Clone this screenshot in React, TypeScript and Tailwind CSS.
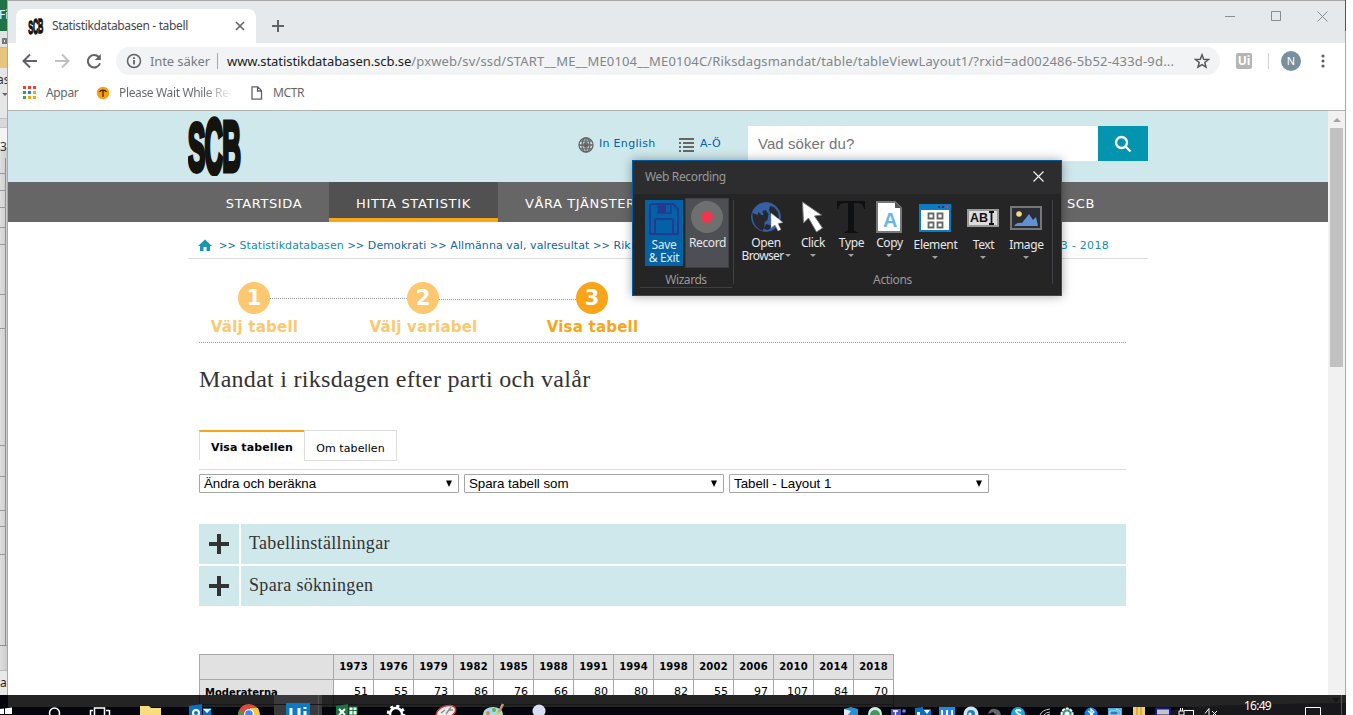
import type { ReactNode } from "react";

function ScbLogo({ className }: { className?: string }) {
  return (
    <svg viewBox="0 0 54 60" className={className} fontFamily="Liberation Sans" fontWeight="700" fontSize="20" fill="#14130e" stroke="#14130e">
      <text transform="translate(-0.3 55.2) scale(1.33 3.4)" strokeWidth="1.4">S</text>
      <text transform="translate(16.4 57) scale(1.28 3.9)" strokeWidth="1.4">C</text>
      <text transform="translate(34.2 54.7) scale(1.3 3.5)" strokeWidth="1.4">B</text>
    </svg>
  );
}

function ExcelEdge() {
  const lines = [173, 190, 207, 227, 244, 294, 328, 445, 476, 510, 526, 554];
  return (
    <div className="absolute top-0 left-0 h-[695px] w-[7px] overflow-hidden bg-[#dcdcdc] font-['Noto_Sans',sans-serif] text-[12px]">
      <div className="h-[31px] bg-[#217346] pt-[7px] leading-4 text-white"><span className="-ml-px">Fi</span></div>
      <div className="flex h-4 items-center bg-[#e3e3e3]"><span className="mt-1 ml-0.5 h-1.5 w-1.5 border-2 border-[#777]" /></div>
      <div className="h-[21px] border-t border-[#b9b9b9] bg-[#e8c47c]" />
      <div className="h-[50px] bg-[#e6e6e6] pt-1 leading-4 text-[#333]">
        <div className="-ml-[3px]">as</div>
        <div className="mt-[5px] ml-0.5 h-0 w-0 border-x-3 border-t-3 border-x-transparent border-t-[#666]" />
      </div>
      <div className="h-[10px] border-y border-[#c4c4c4] bg-[#d8d8d8]" />
      <div className="h-[20px] bg-[#f4f4f4] leading-[38px] text-[#333]">3</div>
      <div className="h-[522px] bg-gradient-to-r from-[#dedede] to-[#cccccc]" />
      <div className="border-t border-[#bbb] bg-[#e8e8e8] leading-6 text-[#222]">ac</div>
      <svg className="absolute top-0 left-0" width="8" height="695">
        <path d="M5.500 158V645M0 645.500H8" stroke="#8f8f8f" fill="none" />
        {lines.map((y) => <path key={y} d={`M0 ${y + 0.5}H6`} stroke="#999" />)}
      </svg>
    </div>
  );
}

function AppsIcon() {
  const colors = ["#ea4335", "#ea4335", "#ea4335", "#34a853", "#1a82f0", "#f6a609", "#34a853", "#f6a609", "#f6a609"];
  return (
    <div className="grid w-[13px] grid-cols-3 gap-[2px]">
      {colors.map((c, i) => <span key={i} className="h-[3px] w-[3px]" style={{ backgroundColor: c }} />)}
    </div>
  );
}

function ChromeTop() {
  return (
    <div className="h-[110px] border-b border-[#b3b3b3] bg-white font-['Noto_Sans',sans-serif]">
      <div className="flex h-[42px] items-end bg-[#e6e9ec] pl-2">
        <div className="flex h-[34px] w-60 items-center rounded-t-lg bg-white pl-3">
          <ScbLogo className="h-[17px] w-4" />
          <span className="ml-2 w-[183px] text-[12px] tracking-[-0.35px] whitespace-nowrap text-[#45494d]">Statistikdatabasen - tabell</span>
          <svg width="10" height="10" viewBox="0 0 10 10" stroke="#5f6368" strokeWidth="1.6"><path d="M1 1l8 8M9 1l-8 8" /></svg>
        </div>
        <svg className="mb-[11px] ml-4" width="12" height="12" stroke="#5f6368" strokeWidth="2"><path d="M6 0v12M0 6h12" /></svg>
        <svg className="mr-[17px] mb-[21px] ml-auto" width="103" height="12" fill="none" stroke="#8a8d90"><path d="M0 6.500h10M46.500 1.500h9v9h-9zM92.500 1.500l10 10M102.500 1.500l-10 10" /></svg>
      </div>
      <div className="flex h-[36px] items-center pl-[14px]">
        <svg width="16" height="16" viewBox="0 0 16 16" fill="none" stroke="#5f6368" strokeWidth="2"><path d="M15 8H2M8 1.500L1.500 8 8 14.500" /></svg>
        <svg className="ml-4" width="16" height="16" viewBox="0 0 16 16" fill="none" stroke="#bdc1c6" strokeWidth="2"><path d="M1 8h13M8 1.500L14.500 8 8 14.500" /></svg>
        <svg className="ml-4" width="16" height="16" viewBox="0 0 16 16" fill="none" stroke="#5f6368" strokeWidth="2"><path d="M14 10.200A6.200 6.200 0 1 1 12.700 4" /><path d="M14.800 1v6h-6z" fill="#5f6368" stroke="none" /></svg>
        <div className="ml-[14px] flex h-7 w-[1104px] items-center rounded-full bg-[#f1f3f4] pl-[10px] text-[13px] whitespace-nowrap">
          <svg width="16" height="16" viewBox="0 0 16 16" fill="none" stroke="#5f6368" strokeWidth="1.5"><circle cx="8" cy="8" r="6.500" /><path d="M8 7v4.500M8 4.300v1.600" strokeWidth="1.800" /></svg>
          <span className="ml-2 w-[67px] pt-px tracking-[-0.1px] text-[#777b80]">Inte säker</span>
          <span className="mr-[9px] h-4 w-px bg-[#a5a8ab]" />
          <span className="w-[967px] pt-px"><span className="tracking-[-0.07px] text-[#202124]">www.statistikdatabasen.scb.se</span><span className="tracking-[0.17px] text-[#80868b]">/pxweb/sv/ssd/START__ME__ME0104__ME0104C/Riksdagsmandat/table/tableViewLayout1/?rxid=ad002486-5b52-433d-9d...</span></span>
          <svg width="16" height="16" viewBox="0 0 16 16" fill="none" stroke="#55595e" strokeWidth="1.500"><path d="M8 1.800l1.700 4.400 4.700.3-3.600 3 1.200 4.600L8 11.600l-4 2.500 1.200-4.600-3.600-3 4.700-.3z" /></svg>
        </div>
        <span className="ml-4 h-4 w-4 rounded-[2px] bg-[#b5b5b5] text-center text-[12px] leading-[15px] font-bold text-white">Ui</span>
        <span className="ml-4 h-4 w-px bg-[#d0d2d5]" />
        <span className="ml-3 h-5 w-5 rounded-full bg-[#78909c] text-center text-[11px] leading-5 text-white">N</span>
        <svg className="ml-5" width="4" height="14" fill="#5f6368"><circle cx="2" cy="2" r="1.600" /><circle cx="2" cy="7" r="1.600" /><circle cx="2" cy="12" r="1.600" /></svg>
      </div>
      <div className="flex h-[27px] items-center pl-[15px] text-[12px] tracking-[-0.35px] whitespace-nowrap text-[#63676c]">
        <AppsIcon />
        <span className="ml-[10px] w-[50px]">Appar</span>
        <svg width="14" height="14" viewBox="0 0 14 14"><circle cx="7" cy="7" r="6.200" fill="#ff9d0a" /><path d="M3.500 6c1.200-2.600 5.800-2.600 7 0M7 4.500V11" stroke="#3c2a08" fill="none" strokeWidth="1.300" /></svg>
        <span className="ml-[9px] w-[112px] overflow-hidden bg-gradient-to-r from-[#63676c] from-75% to-[#63676c]/5 bg-clip-text text-transparent">Please Wait While Rec</span>
        <svg className="ml-[20px]" width="12" height="14" viewBox="0 0 12 14" fill="none" stroke="#5f6368" strokeWidth="1.300"><path d="M1 .8h5.800L10.500 4.500v8.700H1zM6.500 1v4h4" /></svg>
        <span className="ml-[10px]">MCTR</span>
      </div>
    </div>
  );
}

function SiteHeader() {
  return (
    <>
      <header className="flex h-[71px] bg-[#cfe8ec] pl-[180px] font-['DejaVu_Sans',sans-serif] text-[11px] text-[#0063a8]">
        <ScbLogo className="mt-[5px] h-[60px] w-[54px]" />
        <div className="mt-[25px] ml-[336px] flex h-[17px] w-[101px] items-center">
          <svg width="16" height="16" viewBox="0 0 16 16" fill="none" stroke="#666" strokeWidth="1.300"><circle cx="8" cy="8" r="7" /><path d="M8 1v14M1 8h14M3 4.200h10M3 11.800h10" /><ellipse cx="8" cy="8" rx="4" ry="7" /><path d="M5.500 5.500h5v5h-5z" fill="#666" stroke="none" /></svg>
          <span className="ml-[5px] tracking-[0.3px] whitespace-nowrap">In English</span>
        </div>
        <div className="mt-[25px] flex h-[17px] w-[69px] items-center">
          <svg width="16" height="16" stroke="#666" strokeWidth="2"><path d="M0 2h15M0 6h2M4 6h11M0 10h2M4 10h11M0 14h2M4 14h11" /></svg>
          <span className="ml-[5px] tracking-[0.2px]">A-Ö</span>
        </div>
        <div className="mt-[15px] flex h-[35px] w-[350px] items-center bg-white pt-px pl-[10px] font-['Liberation_Sans',sans-serif] text-[15px] tracking-[0.05px] text-[#757575]">Vad söker du?</div>
        <div className="mt-[15px] flex h-[35px] w-[50px] items-center justify-center bg-[#0394b0]">
          <svg width="18" height="18" viewBox="0 0 18 18" fill="none" stroke="#fff" strokeWidth="2.300"><circle cx="7.500" cy="7.500" r="5.500" /><path d="M11.500 11.500l5 5" /></svg>
        </div>
      </header>
      <nav className="flex h-10 bg-[#666] pl-[191px] text-center font-['DejaVu_Sans',sans-serif] text-[13px] leading-[44px] tracking-[0.6px] whitespace-nowrap text-white">
        <span className="w-[130px]">STARTSIDA</span>
        <span className="w-[169px] border-b-4 border-[#faa519] bg-[#515151] tracking-[0.68px]">HITTA STATISTIK</span>
        <span className="ml-[27px] w-[542px] text-left">VÅRA TJÄNSTER</span>
        <span>SCB</span>
      </nav>
      <div className="ml-[180px] flex h-[37px] w-[960px] items-center border-b border-[#ddd] pt-[10px] pl-[10px] font-['DejaVu_Sans',sans-serif] text-[11px] tracking-[0.08px] whitespace-nowrap text-[#0c66a5]">
        <svg width="14" height="12" viewBox="0 0 14 12" fill="#1a97b0"><path d="M7 .5L0 7h2v5h3.500V8h3v4H12V7h2z" /></svg>
        <span className="ml-[7px] w-[416px] overflow-hidden pt-[2px]">
          <span className="text-[10px]">&gt;&gt;</span> <span className="text-[#0f8fa9]">Statistikdatabasen</span> <span className="text-[10px]">&gt;&gt;</span> Demokrati <span className="text-[10px]">&gt;&gt;</span> Allmänna val, valresultat <span className="text-[10px]">&gt;&gt;</span> Rik
        </span>
        <span className="mr-[39px] ml-auto pt-[2px] tracking-[0.3px] text-[#0f8fa9]">3 - 2018</span>
      </div>
    </>
  );
}

function Steps() {
  const circle = "h-8 w-8 rounded-full text-center text-[21px] leading-8 font-bold text-white";
  return (
    <div className="h-[61px] border-b border-dotted border-[#999] font-['DejaVu_Sans',sans-serif]">
      <div className="flex pl-[39px]">
        <span className={`${circle} bg-[#fdc86f]`}>1</span>
        <span className="mt-4 h-px w-[137px] border-t border-dotted border-[#999]" />
        <span className={`${circle} bg-[#fdc86f]`}>2</span>
        <span className="mt-[17px] h-px w-[137px] border-t border-dotted border-[#999]" />
        <span className={`${circle} bg-[#faa519]`}>3</span>
      </div>
      <div className="mt-[3px] flex text-center text-[15px] leading-5 font-bold tracking-[0.22px] whitespace-nowrap text-[#fdc86f]">
        <span className="w-[111px]">Välj tabell</span>
        <span className="ml-[29px] w-[169px]">Välj variabel</span>
        <span className="w-[169px] text-[#faa519]">Visa tabell</span>
      </div>
    </div>
  );
}

function Select({ label }: { label: string }) {
  return (
    <div className="flex h-[19px] w-[260px] items-center justify-between rounded-[1px] border border-[#a6a6a6] pr-[6px] pl-1 font-['Liberation_Sans',sans-serif] text-[13.333px] leading-4 tracking-[-0.03px] text-black">
      {label}
      <svg width="6" height="8"><path d="M0 .5h6L3 7z" /></svg>
    </div>
  );
}

function Accordion({ label }: { label: string }) {
  return (
    <div className="flex h-10 gap-[2px]">
      <div className="flex w-10 items-center justify-center bg-[#cfe8ec]">
        <svg width="20" height="20" stroke="#333" strokeWidth="4"><path d="M10 0v20M0 10h20" /></svg>
      </div>
      <div className="flex-1 bg-[#cfe8ec] pl-2 font-['Liberation_Serif',serif] text-[18px] leading-[39px] tracking-[0.32px] text-[#333]">{label}</div>
    </div>
  );
}

function DataTable() {
  const years = [1973, 1976, 1979, 1982, 1985, 1988, 1991, 1994, 1998, 2002, 2006, 2010, 2014, 2018];
  const seats = [51, 55, 73, 86, 76, 66, 80, 80, 82, 55, 97, 107, 84, 70];
  return (
    <div className="w-[695px] border-t border-l border-[#a8a8a8] font-['DejaVu_Sans',sans-serif] text-[11px] text-black">
      <div className="flex h-[25px] border-b border-[#a8a8a8] bg-[#e1e1e1] text-center text-[10px] leading-6 font-bold tracking-[0.2px]">
        <span className="w-[134px] border-r border-[#a8a8a8]" />
        {years.map((y) => <span key={y} className="w-10 border-r border-[#a8a8a8]">{y}</span>)}
      </div>
      <div className="flex h-[25px] border-b border-[#a8a8a8] text-right leading-6">
        <span className="w-[134px] border-r border-[#a8a8a8] bg-[#e1e1e1] pl-[5px] text-left text-[10px] leading-[25px] font-bold">Moderaterna</span>
        {seats.map((s, i) => <span key={i} className="w-10 border-r border-[#a8a8a8] pr-[5px]">{s}</span>)}
      </div>
    </div>
  );
}

function Caret({ className }: { className?: string }) {
  return <svg className={className} width="6" height="3" fill="#a0a0a0"><path d="M0 0h6L3 3z" /></svg>;
}

function Tool({ label, width, low, children }: { label: ReactNode; width: string; low?: boolean; children: ReactNode }) {
  return (
    <div className={`flex flex-col items-center ${width}`}>
      <div className={`flex items-center ${low ? "h-9" : "h-[34px]"}`}>{children}</div>
      <div className="mt-[2px] pl-px text-center leading-[13px] whitespace-nowrap">{label}</div>
      {typeof label === "string" && <Caret className="mt-[5px]" />}
    </div>
  );
}

function RecordingDialog() {
  return (
    <div className="absolute top-[160px] left-[632px] h-[136px] w-[430px] border border-[#005a9e] bg-[#252526] font-['Noto_Sans',sans-serif] text-[12px] tracking-[-0.35px] text-[#e8e8e8] shadow-[0_0_10px_rgba(0,0,0,0.35)]">
      <div className="flex h-[33px] items-center justify-between bg-[#2d2d30] pr-[17px] pb-px pl-3 text-[#999]">
        Web Recording
        <svg width="11" height="11" className="mb-px" stroke="#f0f0f0" strokeWidth="1.200"><path d="M.5.500l10 10M10.500.500l-10 10" /></svg>
      </div>
      <div className="flex h-[101px]">
        <div className="w-[100px] pl-3">
          <div className="flex h-[80px]">
            <div className="mt-[6px] flex h-[66px] w-[38px] flex-col items-center bg-[#0063a8] pt-[2px] text-center leading-[13px]">
              <svg width="32" height="34" viewBox="0 0 32 34" fill="none" stroke="#29388f" strokeWidth="2"><path d="M4 2h21l5 5v25H2V4q0-2 2-2z" /><path d="M10 2v9h13V2" strokeWidth="1.500" /><path d="M11 2h7v9h-7z" fill="#29388f" stroke="none" /><path d="M7 32V19q0-2 2-2h14q2 0 2 2v13" /></svg>
              <span className="mt-[2px]">Save</span>
              <span className="whitespace-nowrap">&amp; Exit</span>
            </div>
            <div className="mt-1 ml-[2px] flex h-[70px] w-11 flex-col items-center border border-[#3f3f46] bg-[#4e4e55] pt-[2px] leading-[13px]">
              <svg width="32" height="32"><circle cx="16" cy="16" r="16" fill="#6e7070" /><circle cx="16" cy="16" r="6" fill="#f0364d" /></svg>
              <span className="mt-[3px] pl-px">Record</span>
            </div>
          </div>
          <div className="mr-[1px] -ml-[5px] border-b border-[#3f3f46] pb-px text-center leading-3 text-[#999]"><span className="tracking-[-0.45px]">Wizards</span></div>
        </div>
        <div className="mt-[6px] h-[84px] w-[320px] border-x border-[#3f3f46] pl-[7px]">
          <div className="flex h-[74px]">
            <Tool width="w-[49px]" label={<>Open<br /><span className="-ml-[3px] flex items-center gap-[2px] pl-1 tracking-[-0.65px]">Browser <Caret /></span></>}>
              <svg width="34" height="34" viewBox="0 0 34 34"><circle cx="17" cy="17" r="14.500" fill="#3660a6" stroke="#34589a" /><path d="M3.500 13l5 2 1-3 3 3 2 0-1-4 3-1 3 4-1 6-3 2 0 5-2 4q-9-4-10-14zM21 6l4 1 4 5 1 6-5 0-3-3-2-5zM17 24l7 2-5 4-4-1z" fill="#26282c" /><path d="M22 13v15l4-3 3 6 3-1.500-3-6 5-1z" fill="#fff" stroke="#888" strokeWidth=".5" /></svg>
            </Tool>
            <Tool width="w-[45px]" label="Click">
              <svg width="34" height="34" viewBox="0 0 34 34"><path d="M6.500 2l1 21 5-5 8 14 6-4-8-12 7-1z" fill="#fff" stroke="#777" strokeWidth="1" /></svg>
            </Tool>
            <Tool width="w-8" label="Type">
              <svg width="30" height="34" viewBox="0 0 30 34" fill="#0e1011"><path d="M1 1h28v8h-1q-1-6-6-6h-4v26q0 3 4 3v1H8v-1q4 0 4-3V3H8Q3 3 2 9H1z" /></svg>
            </Tool>
            <Tool width="w-11" label="Copy">
              <svg width="28" height="34" viewBox="0 0 28 34"><path d="M2 2h18l6 6v24H2z" fill="#fff" stroke="#777" strokeWidth="2" /><path d="M20 2v6h6z" fill="#555" /><text x="8" y="27" fill="#6cb5e2" fontSize="20" fontWeight="700" fontFamily="Liberation Sans">A</text></svg>
            </Tool>
            <Tool low width="w-12" label="Element">
              <svg width="32" height="28" viewBox="0 0 32 28"><path d="M0 0h32v28H0z" fill="#0e7ac0" /><path d="M2 6h28v20H2z" fill="#fff" /><path d="M19 2h2v2h-2zM23 2h2v2h-2z" fill="#203864" /><path d="M27 2h2v2h-2z" fill="#f0364d" /><path d="M9.500 9.500h5v5h-5zM18.500 9.500h5v5h-5zM9.500 18.500h5v5h-5zM18.500 18.500h5v5h-5z" fill="#fff" stroke="#666" strokeWidth="1.800" /></svg>
            </Tool>
            <Tool low width="w-12" label="Text">
              <svg width="32" height="18" viewBox="0 0 32 18"><path d="M1 1h30v16H1z" fill="#ddd" stroke="#999" strokeWidth="2" /><text x="3" y="13" fill="#111" fontSize="12" fontWeight="700" letterSpacing="0" fontFamily="Liberation Sans" textLength="18" lengthAdjust="spacingAndGlyphs">AB</text><path d="M24.500 3v12M22 3h5M22 15h5" stroke="#111" strokeWidth="1.800" /></svg>
            </Tool>
            <Tool low width="w-[38px]" label="Image">
              <svg width="32" height="24" viewBox="0 0 32 24"><path d="M1 1h30v22H1z" fill="#2a2d33" stroke="#777" strokeWidth="2" /><circle cx="9" cy="8" r="2.800" fill="#f4dc7c" /><path d="M4 20q3-4 8-3l7-9 4 6 3-3 2 9z" fill="#6191d3" /></svg>
            </Tool>
          </div>
          <div className="text-center leading-3 text-[#999]"><span className="mr-2">Actions</span></div>
        </div>
      </div>
    </div>
  );
}

function Taskbar() {
  return (
    <div className="absolute top-[695px] left-0 h-5 w-[1346px] bg-[#05060d]">
      <div className="ml-2 h-3 bg-[#242424]" />
      <svg className="absolute top-0 left-0" width="1346" height="20">
        <path d="M1150 20C1180 12 1190 10 1346 8V20z" fill="#17171c" />
        <path d="M274 0h48v20h-48z" fill="#3a3a3e" />
        <path d="M318.500 0v20" stroke="#555" />
        <path d="M199.500 0v12M333.500 0v12M893.500 0v12M200 9.500h693" stroke="#171717" />
        <path d="M0 14l12-1.500V20H0z" fill="#fff" />
        <path d="M0 19.500h12M4.500 13v7" stroke="#05060d" />
        <g fill="none" stroke="#fff" strokeWidth="1.500">
          <circle cx="54.500" cy="18" r="5" />
          <path d="M94.500 20v-7h10v7M90 15.500h3M90.500 15v5M106 15.500h3M109.500 15v5" />
        </g>
        <path d="M140 11h9l2 2h10v7h-21z" fill="#f9dc7c" />
        <path d="M189 11l13-2v11h-13zM203 13h8v7h-8z" fill="#0a70c4" />
        <path d="M203 14h8l-4 4z" fill="#fff" /><circle cx="196" cy="18" r="3" fill="none" stroke="#fff" strokeWidth="2" />
        <path d="M238 20a11 11 0 0 1 22 0z" fill="#dd4b3e" />
        <path d="M250 13h8l2 7h-10z" fill="#f8ca3e" /><path d="M239 15l5 5h-6z" fill="#35a352" /><circle cx="249" cy="19" r="5" fill="#fff" /><circle cx="249" cy="19" r="3.800" fill="#4285f4" />
        <path d="M286 8h24v12h-24z" fill="#0b7ac5" />
        <path d="M291 13v7M299 13v7M305 16v4M305 12v2" stroke="#fff" strokeWidth="3" />
        <path d="M336 11l12-2v11h-12z" fill="#1f7244" /><path d="M339 14l6 6M345 14l-6 6" stroke="#fff" strokeWidth="2" /><path d="M349 12h8v8h-8zM349 15.500h8M353 12v8" fill="#eaf5ee" stroke="#1f7244" />
        <circle cx="396" cy="19" r="6" fill="none" stroke="#fff" strokeWidth="2.500" /><circle cx="396" cy="19" r="8" fill="none" stroke="#fff" strokeWidth="2.500" strokeDasharray="3 3.300" />
        <ellipse cx="446" cy="17" rx="10" ry="6" transform="rotate(-20 446 17)" fill="#eee" stroke="#c9363c" strokeWidth="1.500" /><path d="M441 18l4-3M446 19l5-7M449 15h4" stroke="#888" strokeWidth="1.300" />
        <ellipse cx="493" cy="19" rx="10" ry="7" fill="#a9d8ee" /><circle cx="488" cy="18" r="2" fill="#e98a2e" /><circle cx="494" cy="15" r="2" fill="#58b74d" /><circle cx="498" cy="18" r="1.800" fill="#e3c634" /><path d="M499 17l4-8" stroke="#c99a5a" strokeWidth="2.500" />
        <circle cx="539" cy="16" r="6.500" fill="#d9def5" />
        <path d="M844 14l7-2 7 2v6h-14z" fill="#2c8fd0" /><path d="M844 14l7 2-3 4h-4z" fill="#dfe9ef" />
        <circle cx="875" cy="19" r="7" fill="#d9e8de" /><path d="M870 20a5 5 0 0 1 10 0" fill="#3d9b5a" />
        <path d="M891 14h10v6h-10z" fill="#4b53bc" /><path d="M893 16h5M895.500 16v4" stroke="#fff" strokeWidth="1.300" /><circle cx="904" cy="16" r="1.800" fill="#7b83eb" />
        <path d="M915 13l8-1v8h-8zM923 14h8v6h-8z" fill="#0a70c4" /><path d="M924 15h6l-3 4zM917 20v-3h3v3" fill="#fff" />
        <path d="M939 12h16v8h-16z" fill="#1c86f2" /><path d="M942 15v5M947 15v5M952 15v5" stroke="#fff" strokeWidth="2" />
        <circle cx="971" cy="19" r="7.500" fill="#cfe7f5" /><circle cx="971" cy="19" r="4" fill="#2280b8" /><circle cx="970" cy="19" r="1.500" fill="#fff" />
        <path d="M988 19q2-6 7-5 5 0 6 6h-5l-3-3z" fill="#666" />
        <circle cx="1018" cy="19" r="7" fill="#15a7e8" /><path d="M1021 16q-3-2-5 0 0 2 5 4" stroke="#fff" strokeWidth="1.800" fill="none" />
        <path d="M1040 20q2-5 10-6M1044 20q2-3 6-3M1047 20l3-1" stroke="#ccc" fill="none" />
        <circle cx="1067" cy="19" r="5.500" fill="#2d9b7f" stroke="#fff" strokeWidth="2" strokeDasharray="3 1" /><circle cx="1067" cy="19" r="2.500" fill="#fff" />
        <circle cx="1091" cy="19" r="6.500" fill="#1380ee" /><path d="M1088 16l5 4M1091 20v-6l3 3-4 3" stroke="#fff" fill="none" strokeWidth="1.200" />
        <path d="M1108 13h14v7h-14z" fill="#4fb3df" /><path d="M1110 16h8v4h-8zM1116 14l4 2v4" fill="#2a7fae" stroke="#d6eef8" strokeWidth=".8" />
        <path d="M1133 12h12v8h-12z" fill="#f2cf6e" /><path d="M1137 12v8M1141 12v8" stroke="#b98a26" />
        <path d="M1156 13.500h14v7h-14z" fill="#c4c4c4" stroke="#151a86" strokeWidth="2" />
        <g fill="none" stroke="#fff"><path d="M1184 15.500h9M1193.500 15v5M1179 16h5v4h-5zM1180.500 13v3M1182.500 13v3M1205 18.500l4-5v7M1212 16l5 5M1217 16l-5 5M1305.500 20v-7.500h15v7.500" /></g>
        <path d="M1332 3h8l-4 4z" fill="#111" />
        <path d="M1341.500 0v20" stroke="#555" />
      </svg>
      <span className="absolute top-[3px] left-[1244px] font-['Noto_Sans',sans-serif] text-[12px] leading-4 tracking-[-0.75px] text-white">16:49</span>
    </div>
  );
}

export default function App() {
  return (
    <div className="relative h-[715px] w-[1353px] overflow-hidden bg-white">
      <ExcelEdge />
      <div className="absolute top-0 left-[7px] h-[707px] w-[1339px] border border-[#a8a8a8] bg-white">
        <ChromeTop />
        <div className="flex h-[596px]">
          <main className="w-[1320px] overflow-hidden">
            <SiteHeader />
            <div className="ml-[191px] w-[927px] pt-[23px]">
              <Steps />
              <h1 className="mt-[21px] h-[30px] font-['Liberation_Serif',serif] text-[24px] leading-[30px] tracking-[0.29px] text-[#333]">Mandat i riksdagen efter parti och valår</h1>
              <div className="mt-9 flex h-10 border-b border-[#ddd] font-['DejaVu_Sans',sans-serif] text-[11px] text-black">
                <span className="h-[30px] w-[105px] border-t-2 border-l border-t-[#faa519] border-l-[#ddd] text-center leading-[31px] font-bold tracking-[0.1px]">Visa tabellen</span>
                <span className="h-[31px] w-[93px] border border-[#ddd] text-center leading-[35px] tracking-[0.1px]">Om tabellen</span>
              </div>
              <div className="mt-1 flex gap-[5px]">
                <Select label="Ändra och beräkna" />
                <Select label="Spara tabell som" />
                <Select label="Tabell - Layout 1" />
              </div>
              <div className="mt-[31px] mb-12 flex flex-col gap-[2px]">
                <Accordion label="Tabellinställningar" />
                <Accordion label="Spara sökningen" />
              </div>
              <DataTable />
            </div>
          </main>
          <div className="flex w-[17px] flex-col items-center bg-[#f1f1f1]">
            <div className="mt-[7px] h-0 w-0 border-x-4 border-b-4 border-x-transparent border-b-[#a3a3a3]" />
            <div className="mt-[6px] h-[239px] w-[13px] bg-[#c1c1c1]" />
          </div>
        </div>
      </div>
      <div className="absolute top-0 left-[1345px] h-[31px] w-px bg-[#35694c]" />
      <RecordingDialog />
      <Taskbar />
    </div>
  );
}
